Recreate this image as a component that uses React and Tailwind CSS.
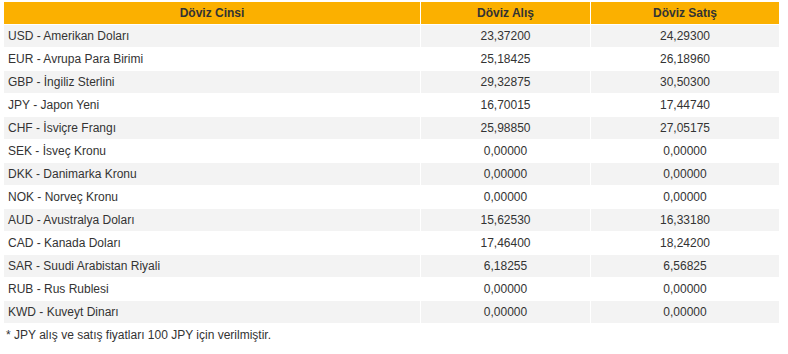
const rates = [
  ["USD - Amerikan Doları", "23,37200", "24,29300"],
  ["EUR - Avrupa Para Birimi", "25,18425", "26,18960"],
  ["GBP - İngiliz Sterlini", "29,32875", "30,50300"],
  ["JPY - Japon Yeni", "16,70015", "17,44740"],
  ["CHF - İsviçre Frangı", "25,98850", "27,05175"],
  ["SEK - İsveç Kronu", "0,00000", "0,00000"],
  ["DKK - Danimarka Kronu", "0,00000", "0,00000"],
  ["NOK - Norveç Kronu", "0,00000", "0,00000"],
  ["AUD - Avustralya Doları", "15,62530", "16,33180"],
  ["CAD - Kanada Doları", "17,46400", "18,24200"],
  ["SAR - Suudi Arabistan Riyali", "6,18255", "6,56825"],
  ["RUB - Rus Rublesi", "0,00000", "0,00000"],
  ["KWD - Kuveyt Dinarı", "0,00000", "0,00000"],
];

export default function App() {
  return (
    <div className="min-h-screen bg-white pl-[3px] pt-px text-[12px] text-[#333] font-['Liberation_Sans',Arial,sans-serif]">
      <table className="border-separate border-spacing-px w-[777px] table-fixed">
        <colgroup>
          <col className="w-[416px]" />
          <col className="w-[169px]" />
          <col className="w-[188px]" />
        </colgroup>
        <thead>
          <tr className="bg-[#fbb000] h-[22px]">
            <th className="font-bold text-center p-0">Döviz Cinsi</th>
            <th className="font-bold text-center p-0">Döviz Alış</th>
            <th className="font-bold text-center p-0">Döviz Satış</th>
          </tr>
        </thead>
        <tbody>
          {rates.map((r, i) => (
            <tr key={r[0]} className={`h-[22px] ${i % 2 === 0 ? "bg-[#f3f3f3]" : "bg-white"}`}>
              <td className="px-1 py-0">{r[0]}</td>
              <td className="text-center p-0">{r[1]}</td>
              <td className="text-center p-0">{r[2]}</td>
            </tr>
          ))}
        </tbody>
      </table>
      <p className="pl-[3px] pt-[2px] text-[12px]">* JPY alış ve satış fiyatları 100 JPY için verilmiştir.</p>
    </div>
  );
}
